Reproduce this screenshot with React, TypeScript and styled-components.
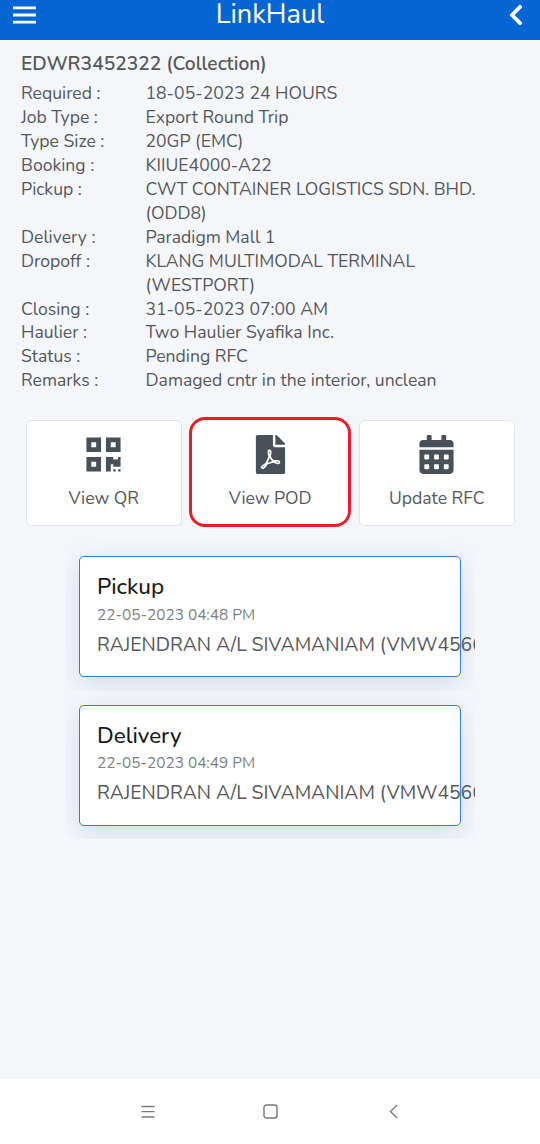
import React from "react";
import styled, { createGlobalStyle } from "styled-components";
import { FaCalendarAlt, FaChevronLeft, FaFilePdf, FaQrcode } from "react-icons/fa";

const GlobalStyle = createGlobalStyle`
  * { box-sizing: border-box; }
  body {
    margin: 0;
    background: #f4f6fa;
    color: #56585c;
    font-family: Nunito, Lato, "Open Sans", sans-serif;
  }
`;

const Screen = styled.div`
  width: 540px;
  height: 1144px;
  display: flex;
  flex-direction: column;
  overflow: hidden;
  background: #f4f6fa;
`;

const Header = styled.header`
  flex: none;
  height: 40px;
  padding: 0 13px 11px 13px;
  display: grid;
  grid-template-columns: 23px 1fr 23px;
  grid-template-rows: 29px;
  align-items: center;
  justify-items: center;
  background: #0565d2;
  color: #fff;
`;

const AppTitle = styled.h1`
  margin: 0;
  font-size: 27.2px;
  line-height: 29px;
  font-weight: 400;
  white-space: nowrap;
`;

const JobDetails = styled.section`
  flex: none;
  height: 380px;
  padding: 12px 40px 0 21px;
`;

const JobTitle = styled.h2`
  margin: 0 0 6.4px;
  font-size: 19.2px;
  line-height: 24px;
  font-weight: 600;
`;

const Fields = styled.dl`
  margin: 0;
`;

const Field = styled.div`
  display: grid;
  grid-template-columns: 124.5px 1fr;
  font-size: 17.6px;
  line-height: 23.9px;
`;

const Term = styled.dt``;

const Value = styled.dd`
  margin: 0;
`;

const Line = styled.span`
  display: block;
  white-space: nowrap;
`;

const Actions = styled.nav`
  flex: none;
  display: grid;
  grid-template-columns: repeat(3, 155.5px);
  gap: 11px;
  padding-left: 26px;
`;

const Action = styled.button<{ $highlighted?: boolean }>`
  position: relative;
  height: 106px;
  padding: 14px 0 0;
  display: flex;
  flex-direction: column;
  align-items: center;
  gap: 12px;
  border: 1px solid ${(p) => (p.$highlighted ? "#fff" : "#e2e5ea")};
  border-radius: 5px;
  background: #fff;
  color: #495057;
  font: inherit;

  &::after {
    content: "";
    display: ${(p) => (p.$highlighted ? "block" : "none")};
    position: absolute;
    inset: -4px -4px -2px -4.5px;
    border: 3px solid #ed1c24;
    border-radius: 16px;
  }
`;

const ActionLabel = styled.span`
  font-size: 17.6px;
  line-height: 25px;
  color: #56585c;
`;

const Timeline = styled.main`
  flex: 1;
  width: 409px;
  margin: 16px 0 0 66px;
`;

const EventFrame = styled.div`
  height: 148.5px;
  padding: 14px 14px 0 13px;
  overflow: hidden;
`;

const EventCard = styled.article`
  height: 121px;
  padding: 16px 0 0 17px;
  border: 1px solid #2f7fd8;
  border-radius: 5px;
  background: #fff;
  box-shadow: 0 7px 26px rgba(67, 95, 155, 0.17);
  white-space: nowrap;
`;

const EventTitle = styled.h3`
  margin: 0;
  font-size: 22.4px;
  line-height: 27px;
  font-weight: 500;
  color: #17191c;
`;

const EventTime = styled.time`
  display: block;
  margin-top: 4.5px;
  font-size: 15.4px;
  line-height: 20px;
  color: #7c8188;
`;

const Driver = styled.p`
  margin: 7px 0 0;
  font-size: 19.28px;
  line-height: 26px;
`;

const SystemBar = styled.footer`
  flex: none;
  height: 65px;
  padding: 0 142px 0 141px;
  display: flex;
  align-items: center;
  justify-content: space-between;
  background: #fff;
`;

const rows: { term: string; lines: string[] }[] = [
  { term: "Required :", lines: ["18-05-2023 24 HOURS"] },
  { term: "Job Type :", lines: ["Export Round Trip"] },
  { term: "Type Size :", lines: ["20GP (EMC)"] },
  { term: "Booking :", lines: ["KIIUE4000-A22"] },
  { term: "Pickup :", lines: ["CWT CONTAINER LOGISTICS SDN. BHD.", "(ODD8)"] },
  { term: "Delivery :", lines: ["Paradigm Mall 1"] },
  { term: "Dropoff :", lines: ["KLANG MULTIMODAL TERMINAL", "(WESTPORT)"] },
  { term: "Closing :", lines: ["31-05-2023 07:00 AM"] },
  { term: "Haulier :", lines: ["Two Haulier Syafika Inc."] },
  { term: "Status :", lines: ["Pending RFC"] },
  { term: "Remarks :", lines: ["Damaged cntr in the interior, unclean"] },
];

const events = [
  { title: "Pickup", time: "22-05-2023 04:48 PM" },
  { title: "Delivery", time: "22-05-2023 04:49 PM" },
];

export default function App() {
  return (
    <Screen>
      <GlobalStyle />
      <Header>
        <svg width="23" height="18" viewBox="0 0 23 18" fill="currentColor" aria-label="Menu">
          <path d="M0 0.4h23v2.8H0zM0 7.6h23v2.8H0zM0 14.8h23v2.8H0z" />
        </svg>
        <AppTitle>LinkHaul</AppTitle>
        <FaChevronLeft size={24} />
      </Header>

      <JobDetails>
        <JobTitle>EDWR3452322 (Collection)</JobTitle>
        <Fields>
          {rows.map((row) => (
            <Field key={row.term}>
              <Term>{row.term}</Term>
              <Value>
                {row.lines.map((text) => (
                  <Line key={text}>{text}</Line>
                ))}
              </Value>
            </Field>
          ))}
        </Fields>
      </JobDetails>

      <Actions>
        <Action>
          <FaQrcode size={39} />
          <ActionLabel>View QR</ActionLabel>
        </Action>
        <Action $highlighted>
          <FaFilePdf size={39} />
          <ActionLabel>View POD</ActionLabel>
        </Action>
        <Action>
          <FaCalendarAlt size={39} />
          <ActionLabel>Update RFC</ActionLabel>
        </Action>
      </Actions>

      <Timeline>
        {events.map((event) => (
          <EventFrame key={event.title}>
            <EventCard>
              <EventTitle>{event.title}</EventTitle>
              <EventTime>{event.time}</EventTime>
              <Driver>RAJENDRAN A/L SIVAMANIAM (VMW4566)</Driver>
            </EventCard>
          </EventFrame>
        ))}
      </Timeline>

      <SystemBar>
        <svg width="14" height="14" viewBox="0 0 14 14" fill="none" stroke="#777" strokeWidth="1.3">
          <path d="M0.5 1.5h13M0.5 6.7h13M0.5 12h13" />
        </svg>
        <svg width="18" height="15" viewBox="0 0 18 15" fill="none" stroke="#777" strokeWidth="1.4">
          <rect x="1" y="1" width="13" height="13" rx="2.5" />
        </svg>
        <svg width="9" height="15" viewBox="0 0 9 15" fill="none" stroke="#777" strokeWidth="1.4">
          <path d="M8 1 1.5 7.5 8 14" />
        </svg>
      </SystemBar>
    </Screen>
  );
}
